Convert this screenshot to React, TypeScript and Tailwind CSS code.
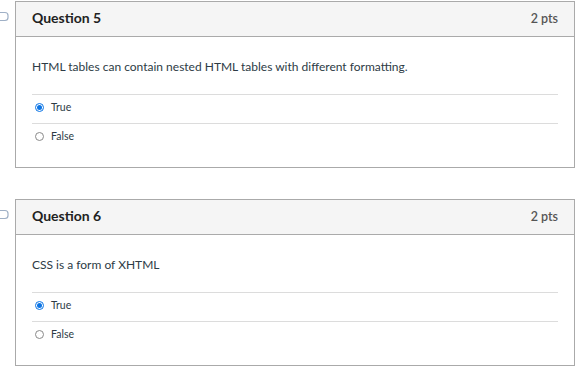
import React from "react";

type Question = {
  id: number;
  title: string;
  points: string;
  text: string;
  answer: string;
};

const questions: Question[] = [
  {
    id: 5,
    title: "Question 5",
    points: "2 pts",
    text: "HTML tables can contain nested HTML tables with different formatting.",
    answer: "True",
  },
  {
    id: 6,
    title: "Question 6",
    points: "2 pts",
    text: "CSS is a form of XHTML",
    answer: "True",
  },
];

function Radio({ checked }: { checked: boolean }) {
  return checked ? (
    <span className="flex h-[9px] w-[9px] items-center justify-center rounded-full border border-[#0b74e5] bg-white">
      <span className="h-[5px] w-[5px] rounded-full bg-[#0b74e5]" />
    </span>
  ) : (
    <span className="h-[9px] w-[9px] rounded-full border border-[#8a8a8a] bg-white" />
  );
}

function QuestionCard({ q }: { q: Question }) {
  return (
    <div className="relative">
      <svg className="absolute -left-[20px] top-[9px] h-[14px] w-[14px]" viewBox="0 0 14 14" fill="none">
        <path d="M1 2.5h9a3 3 0 0 1 3 3v2a3 3 0 0 1-3 3H1" stroke="#9fb0c6" strokeWidth="1.2" />
      </svg>
      <div className="border border-[#aaaaaa] bg-white">
        <div className="flex h-[35px] items-center justify-between border-b border-[#aaaaaa] bg-[#f5f5f5] px-4">
          <span className="mb-[3px] text-[14px] font-bold text-[#222]">{q.title}</span>
          <span className="text-[12.5px] font-semibold text-[#555]">{q.points}</span>
        </div>
        <div className="px-4 pt-[22px] pb-[15px]">
          <p className="text-[12px] leading-4 text-[#2d3b45]">{q.text}</p>
          <div className="mt-[19px]">
            {["True", "False"].map((opt) => (
              <div key={opt} className="flex h-[29px] items-start gap-[7px] border-t border-[#dcdcdc] pl-[3px] pt-[5px]">
                <span className="flex h-[14px] items-center">
                  <Radio checked={opt === q.answer} />
                </span>
                <span className="text-[10.5px] leading-[14px] text-[#2d3b45]">{opt}</span>
              </div>
            ))}
          </div>
        </div>
      </div>
    </div>
  );
}

export default function App() {
  return (
    <div className="h-[370px] w-[576px] overflow-hidden bg-white pl-[15px] pt-px font-['Lato',sans-serif]">
      <div className="flex w-[560px] flex-col gap-[31px]">
        {questions.map((q) => (
          <QuestionCard key={q.id} q={q} />
        ))}
      </div>
    </div>
  );
}
